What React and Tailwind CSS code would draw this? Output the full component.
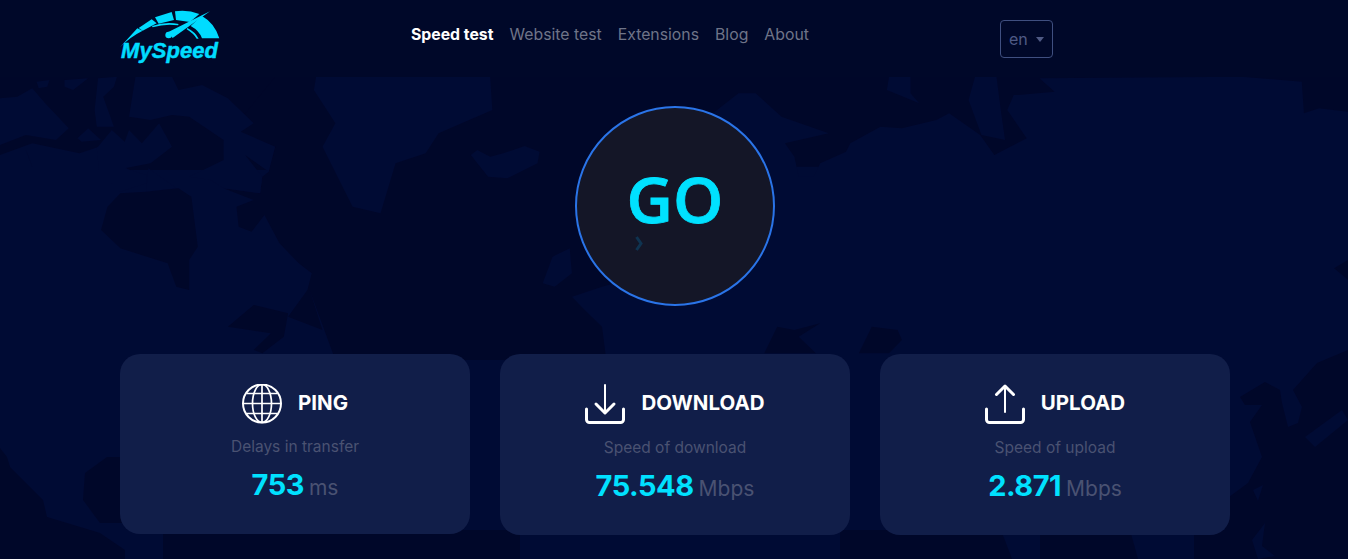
const font = { fontFamily: '"Inter", "Liberation Sans", sans-serif' }

/* map traced from crops, shapes keep the crop's coordinate space */
function WorldMap() {
  const dark = '#000729'
  const light = '#000b34'
  return (
    <svg className="absolute left-0 top-0" width="1348" height="559" viewBox="0 0 1348 559">
      <rect width="1348" height="559" fill={light} />
      <g fill={dark} transform="translate(0 60) scale(0.43 0.3333)">
        <path d="M0 50L640 50L640 330L300 330L230 260L185 280L75 250L0 285Z" />
        <path d="M520 240L640 260L625 335L610 350L605 400L520 385L590 420L550 440L555 500L585 515L615 465L650 550L695 610L725 640L715 690L670 770L750 810L720 690L780 900L1568 900L1568 50L640 50Z" />
        <path d="M60 270L75 320L65 285Z" />
        <path d="M530 800L590 735L670 760L660 830L610 880L590 870L630 820Z" />
      </g>
      <g fill={light} transform="translate(0 60) scale(0.43 0.3333)">
        <path d="M0 115L40 110L75 85L105 130L160 205L130 240L60 225L0 255Z" />
        <path d="M85 65L115 60L110 80L90 85Z" />
        <path d="M150 60L205 55L185 75L170 90L150 80Z" />
        <path d="M228 55L272 50L265 80L240 110L265 200L225 200L220 150Z" />
        <path d="M180 235L205 205L235 240L190 245Z" />
        <path d="M300 170L315 50L400 50L415 90L470 75L530 115L590 190L560 215L640 260L625 335L570 285L610 350L605 400L520 385L490 360L440 350L520 300L520 240L440 170L400 165L350 180Z" />
        <path d="M225 265L260 210L290 245L300 210L330 250L370 190L400 260L350 310L290 325L340 345L340 370L280 395L230 330Z" />
        <path d="M345 325L410 385L340 395Z" />
        <path d="M735 50L1140 50L1145 150L1020 220L990 280L920 310L885 460L820 440L750 260L780 190L730 90Z" />
        <path d="M1095 285L1110 270L1140 290L1170 280L1220 258L1255 275L1250 310L1180 355L1135 350L1110 310Z" />
        <path d="M1262 670L1285 590L1325 565L1330 640L1290 680Z" />
        <path d="M1330 710L1400 680L1568 620L1568 900L1410 900L1400 800L1360 750Z" />
      </g>
      <g fill={dark} transform="translate(0 60) scale(0.43 0.3333)">
        <path d="M280 400L340 395L415 385L445 410L460 560L440 600L440 690L410 680L390 610L280 565L235 510L250 440Z" />
      </g>
      <g fill={dark} transform="translate(674 60) scale(0.43 0.3333)">
        <path d="M0 50H1568V200H900V320H0Z" />
      </g>
      <g fill={light} transform="translate(674 60) scale(0.43 0.3333)">
        <path d="M0 250L100 150L150 100L190 100L250 170L360 220L258 250L280 290L290 350L325 350L340 310L400 275L410 250L480 200L530 205L610 180L640 160L712 225L745 285L820 235L775 150L790 105L800 105L885 95L850 55L1320 50L1460 65L1465 160L1500 145L1568 155L1568 900L0 900Z" />
        <path d="M500 50L550 50L550 100L570 130L495 90Z" />
        <path d="M700 50L750 50L760 150L770 240L715 225L685 120Z" />
      </g>
      <g fill={dark} transform="translate(674 60) scale(0.43 0.3333)">
        <path d="M210 880L240 800L280 810L340 790L290 830L330 880Z" />
        <path d="M430 880L460 800L520 810L530 840L500 880Z" />
        <path d="M1535 625L1568 600L1568 660Z" />
      </g>
      <g fill={dark}>
        <path d="M0 448L7 457L10 467L43 500L47 517L100 533L125 550L125 559L0 559Z" />
        <path d="M85 473L107 457L125 457L125 523L100 523L83 500Z" />
        <path d="M163 530H520V559H163Z" />
        <path d="M840 530H1001L1012 559H840Z" />
        <path d="M1040 530H1130L1138 559H1040Z" />
        <path d="M1194 530H1230V559H1194Z" />
        <path d="M1240 397L1265 382L1280 390L1282 403L1288 427L1298 423L1302 407L1293 390L1317 363L1348 350L1348 559L1225 559L1225 500L1248 483L1262 457L1250 422L1262 405L1245 405Z" />
      </g>
      <g fill={light}>
        <path d="M1305 437L1342 410L1348 420L1315 447Z" />
        <path d="M1253 490L1263 485L1258 501Z" />
        <path d="M1252 540L1265 523L1262 546L1275 556L1258 559Z" />
      </g>
    </svg>
  )
}

function Logo() {
  return (
    <svg width="100" height="56" viewBox="0 0 100 56" className="shrink-0">
      <g fill="#00dcff" transform="translate(-20 -8) scale(0.3333)">
        <path d="M60 142L112 85L128 92Q88 112 60 142Z" />
        <path d="M116 84L155 58L170 70L128 92Z" />
        <path d="M165 52L215 36L222 60L176 71Z" />
        <path d="M225 34Q262 28 298 42L270 66L228 60Z" />
        <path d="M305 47Q345 70 358 115H306Q298 92 272 78Z" />
        <path d="M156 78Q196 64 236 72L234 76Q196 70 158 82Z" />
        <path d="M262 84Q286 96 296 116H290Q280 100 260 88Z" />
        <path d="M205 96L330 34L218 114Z" />
        <circle cx="206" cy="105" r="10" />
      </g>
      <text x="1" y="50" fontSize="22" fontStyle="italic" fontWeight="700" fill="#00dcff" stroke="#00dcff" strokeWidth="0.5" textLength="97" lengthAdjust="spacing" style={{ fontFamily: '"Liberation Sans", sans-serif' }}>
        MySpeed
      </text>
    </svg>
  )
}

function Globe() {
  return (
    <svg width="40" height="40" viewBox="0 0 40 40" fill="none" stroke="white" strokeWidth="1.7">
      <circle cx="20" cy="19.5" r="19" strokeWidth="2" />
      <ellipse cx="20" cy="19.5" rx="9.5" ry="19" />
      <path d="M20 .5V38.5M1 19.5H39M4.5 9.5H35.5M4.5 29.5H35.5" />
    </svg>
  )
}

function TrayIcon({ up }) {
  return (
    <svg width="40" height="40" viewBox="0 0 40 40" fill="none" stroke="white" strokeLinecap="round" strokeLinejoin="round">
      <path d="M1.5 25V35.5a3 3 0 0 0 3 3H35.5a3 3 0 0 0 3-3V25" strokeWidth="3" />
      {up ? (
        <>
          <path d="M20 2V28" strokeWidth="2" />
          <path d="M11.5 10.5L20 2L28.5 10.5" strokeWidth="3" />
        </>
      ) : (
        <>
          <path d="M20 1V28" strokeWidth="2" />
          <path d="M11 20L20 29L29 20" strokeWidth="3" />
        </>
      )}
    </svg>
  )
}

function Card({ icon, title, sub, value, unit, ping }) {
  return (
    <div className={`flex w-[350px] flex-col items-center rounded-[20px] bg-[#111e49] pt-[30px] ${ping ? 'h-[180px]' : 'h-[181px]'}`}>
      <div className="flex h-[40px] items-center gap-[16px]">
        {icon}
        <span className="-mt-[2px] text-[20.5px] font-bold leading-none text-white">{title}</span>
      </div>
      <p className={`text-[15.5px] leading-[20px] text-[#4a5272] ${ping ? 'mt-[13px]' : 'mt-[14px]'}`}>{sub}</p>
      <p className="mt-[8px] flex items-baseline gap-[5px] leading-[40px]">
        <span className="text-[29px] font-bold tracking-[-0.5px] text-[#00e1ff]">{value}</span>
        <span className="text-[21px] text-[#4a5272]">{unit}</span>
      </p>
    </div>
  )
}

export default function App() {
  return (
    <div className="relative h-[559px] w-[1348px] overflow-hidden bg-[#000829]" style={font}>
      <WorldMap />
      <div className="relative">
        <header className="flex h-[77px] items-start bg-[#000829] pl-[120px]">
          <div className="w-[291px] pt-[8px]">
            <Logo />
          </div>
          <nav className="flex w-[589px] gap-[16px] pt-[25px] text-[15.8px] leading-[20px] text-[#6f7488]">
            <a className="font-bold text-white">Speed test</a>
            <a>Website test</a>
            <a>Extensions</a>
            <a>Blog</a>
            <a>About</a>
          </nav>
          <div className="mt-[20px] flex h-[38px] w-[53px] items-center gap-[8px] rounded border border-[#3f4f80] pl-[8px] text-[16px] text-[#4f5a85]">
            en
            <span className="h-0 w-0 border-x-[4.5px] border-t-[5px] border-x-transparent border-t-[#4f5a85]" />
          </div>
        </header>

        <div className="flex justify-center pl-[2px] pt-[29px]">
          <div className="relative flex h-[200px] w-[200px] items-center justify-center rounded-full border-2 border-[#2a74e8] bg-[#141627]">
            <span className="-mt-[14px] text-[64px] font-semibold leading-none text-[#00e1ff] [-webkit-text-stroke:0.8px_#00e1ff]" style={{ fontFamily: '"Open Sans", sans-serif' }}>GO</span>
            <svg className="absolute left-[58px] top-[128px]" width="8" height="15" viewBox="0 0 8 15">
              <path d="M1.5 1L6 7.5L1.5 14" fill="none" stroke="#0f3350" strokeWidth="3" />
            </svg>
          </div>
        </div>

        <div className="flex gap-[30px] pl-[120px] pt-[48px]">
          <Card ping icon={<Globe />} title="PING" sub="Delays in transfer" value="753" unit="ms" />
          <Card icon={<TrayIcon />} title="DOWNLOAD" sub="Speed of download" value="75.548" unit="Mbps" />
          <Card icon={<TrayIcon up />} title="UPLOAD" sub="Speed of upload" value="2.871" unit="Mbps" />
        </div>
      </div>
    </div>
  )
}
